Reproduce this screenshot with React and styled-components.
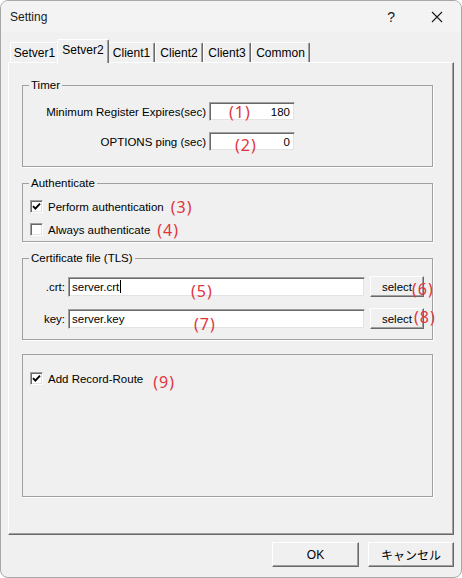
import styled, { createGlobalStyle } from 'styled-components';

const GlobalStyle = createGlobalStyle`
  html, body {
    margin: 0;
    padding: 0;
    background: #ffffff;
  }
  * {
    box-sizing: border-box;
  }
`;

const tabs = [
  { label: 'Setver1', width: 49 },
  { label: 'Setver2', width: 52, active: true },
  { label: 'Client1', width: 47 },
  { label: 'Client2', width: 48 },
  { label: 'Client3', width: 48 },
  { label: 'Common', width: 59 },
];

const CheckMark = () => (
  <svg width="9" height="9" viewBox="0 0 9 9">
    <path d="M1 4.2 L3.4 6.6 L8 1.6" fill="none" stroke="#000" strokeWidth="1.9" />
  </svg>
);

const Checkbox = ({ checked }) => (
  <Box>{checked && <CheckMark />}</Box>
);

const App = () => {
  return (
    <>
      <GlobalStyle />
      <Window>
        <TitleBar>
          <Title>Setting</Title>
          <TitleButtons>
            <Help>?</Help>
            <svg width="12" height="12" viewBox="0 0 12 12">
              <path d="M1 1 L11 11 M11 1 L1 11" stroke="#1a1a1a" strokeWidth="1.1" />
            </svg>
          </TitleButtons>
        </TitleBar>

        <Body>
          <TabStrip>
            {tabs.map((t) => (
              <Tab key={t.label} $active={t.active} $w={t.width}>{t.label}</Tab>
            ))}
          </TabStrip>

          <Panel>
            <Group $h={82}>
              <Legend>Timer</Legend>
              <FieldRow>
                <FieldLabel $w={183}>Minimum Register Expires(sec)</FieldLabel>
                <TextBox $w={86} $h={19} $right>180</TextBox>
              </FieldRow>
              <FieldRow $mt={11}>
                <FieldLabel $w={183}>OPTIONS ping (sec)</FieldLabel>
                <TextBox $w={86} $h={19} $right>0</TextBox>
              </FieldRow>
              <Note $x={206} $y={18}>(1)</Note>
              <Note $x={212} $y={51}>(2)</Note>
            </Group>

            <Group $h={59}>
              <Legend>Authenticate</Legend>
              <CheckRow>
                <Checkbox checked />
                <span>Perform authentication</span>
                <InlineNote>(3)</InlineNote>
              </CheckRow>
              <CheckRow $mt={10}>
                <Checkbox />
                <span>Always authenticate</span>
                <InlineNote>(4)</InlineNote>
              </CheckRow>
            </Group>

            <Group $h={82}>
              <Legend>Certificate file (TLS)</Legend>
              <FieldRow $top={17}>
                <FieldLabel $w={42}>.crt:</FieldLabel>
                <TextBox $w={297} $h={20}>server.crt<Caret /></TextBox>
                <SelectButton>select</SelectButton>
              </FieldRow>
              <FieldRow $mt={11}>
                <FieldLabel $w={42}>key:</FieldLabel>
                <TextBox $w={297} $h={20}>server.key</TextBox>
                <SelectButton>select</SelectButton>
              </FieldRow>
              <Note $x={168} $y={24}>(5)</Note>
              <Note $x={389} $y={22}>(6)</Note>
              <Note $x={171} $y={57}>(7)</Note>
              <Note $x={391} $y={50}>(8)</Note>
            </Group>

            <Group $h={143} $gap={14}>
              <CheckRow $top={17}>
                <Checkbox checked />
                <span>Add Record-Route</span>
                <InlineNote $gap={5} $drop={3}>(9)</InlineNote>
              </CheckRow>
            </Group>
          </Panel>

          <Footer>
            <DialogButton $w={87}>OK</DialogButton>
            <DialogButton $w={86}>キャンセル</DialogButton>
          </Footer>
        </Body>
      </Window>
    </>
  );
};

const Window = styled.div`
  width: 462px;
  height: 578px;
  border: 1px solid #a8a8a8;
  border-radius: 8px;
  background: #f0f0f0;
  display: flex;
  flex-direction: column;
  overflow: hidden;
  font-family: "Liberation Sans", Arial, sans-serif;
  color: #000;
`;

const TitleBar = styled.div`
  height: 31px;
  display: flex;
  align-items: center;
  justify-content: space-between;
  padding: 0 18px 0 9px;
  background: #f3f3f3;
`;

const Title = styled.div`
  font-size: 12px;
  color: #1a1a1a;
`;

const TitleButtons = styled.div`
  display: flex;
  align-items: center;
  gap: 36px;
`;

const Help = styled.span`
  font-size: 14px;
  color: #1a1a1a;
`;

const Body = styled.div`
  padding: 0 7px;
  display: flex;
  flex-direction: column;
`;

const TabStrip = styled.div`
  height: 30px;
  display: flex;
  align-items: flex-end;
  padding-left: 2px;
  position: relative;
  z-index: 1;
`;

const Tab = styled.div`
  width: ${(p) => p.$w}px;
  height: ${(p) => (p.$active ? 24 : 20)}px;
  margin: ${(p) => (p.$active ? '0 -1px -1px -2px' : '0')};
  padding-top: ${(p) => (p.$active ? 3 : 3)}px;
  text-align: center;
  font-size: 12px;
  background: #f0f0f0;
  border-top: 1px solid #ffffff;
  border-left: 1px solid #ffffff;
  border-right: 1px solid #696969;
  box-shadow: inset -1px 0 #a0a0a0;
  border-radius: 2px 2px 0 0;
  position: relative;
  z-index: ${(p) => (p.$active ? 2 : 1)};
`;

const Panel = styled.div`
  height: 473px;
  background: #f0f0f0;
  border-top: 1px solid #ffffff;
  border-left: 1px solid #ffffff;
  border-right: 1px solid #696969;
  border-bottom: 1px solid #696969;
  box-shadow: inset -1px -1px #a0a0a0;
  padding: 22px 20px 0 13px;
  display: flex;
  flex-direction: column;
  gap: 16px;
`;

const Group = styled.div`
  position: relative;
  height: ${(p) => p.$h}px;
  margin-top: ${(p) => (p.$gap ? p.$gap - 16 : 0)}px;
  border: 1px solid #a0a0a0;
  box-shadow: 1px 1px #ffffff;
  padding: 16px 0 0 7px;
  font-size: 11.5px;
`;

const Legend = styled.span`
  position: absolute;
  top: -8px;
  left: 6px;
  padding: 0 2px;
  background: #f0f0f0;
  line-height: 14px;
`;

const FieldRow = styled.div`
  display: flex;
  align-items: center;
  margin-top: ${(p) => p.$mt || 0}px;
  margin-left: -7px;
  padding-top: ${(p) => (p.$top ? p.$top - 16 : 0)}px;
`;

const FieldLabel = styled.span`
  width: ${(p) => p.$w}px;
  text-align: right;
  padding-right: 0;
  margin-right: 3px;
`;

const TextBox = styled.div`
  width: ${(p) => p.$w}px;
  height: ${(p) => p.$h}px;
  background: #ffffff;
  border: 1px solid;
  border-color: #a0a0a0 #f0f0f0 #f0f0f0 #a0a0a0;
  box-shadow: inset 1px 1px #696969, inset -1px -1px #e3e3e3;
  display: flex;
  align-items: center;
  justify-content: ${(p) => (p.$right ? 'flex-end' : 'flex-start')};
  padding: 0 4px 0 3px;
`;

const Caret = styled.span`
  display: inline-block;
  width: 1px;
  height: 13px;
  background: #000;
  margin-left: 1px;
`;

const SelectButton = styled.div`
  width: 54px;
  height: 21px;
  margin-left: 5px;
  display: flex;
  align-items: center;
  justify-content: center;
  background: #f0f0f0;
  border: 1px solid;
  border-color: #ffffff #696969 #696969 #ffffff;
  box-shadow: inset -1px -1px #a0a0a0;
`;

const CheckRow = styled.div`
  display: flex;
  align-items: center;
  height: 13px;
  margin-top: ${(p) => p.$mt || 0}px;
  padding-top: ${(p) => (p.$top ? p.$top - 16 : 0)}px;
  box-sizing: content-box;
  gap: 5px;
`;

const Box = styled.span`
  width: 13px;
  height: 13px;
  background: #ffffff;
  border: 1px solid;
  border-color: #a0a0a0 #ffffff #ffffff #a0a0a0;
  box-shadow: inset 1px 1px #696969, inset -1px -1px #e3e3e3;
  display: flex;
  align-items: center;
  justify-content: center;
  flex-shrink: 0;
`;

const Note = styled.span`
  position: absolute;
  left: ${(p) => p.$x}px;
  top: ${(p) => p.$y}px;
  font-family: "Noto Sans", sans-serif;
  font-size: 16px;
  line-height: 16px;
  letter-spacing: 1px;
  color: #e0353f;
`;

const InlineNote = styled.span`
  margin-left: ${(p) => p.$gap || 2}px;
  position: relative;
  top: ${(p) => p.$drop || 0}px;
  font-family: "Noto Sans", sans-serif;
  font-size: 16px;
  line-height: 16px;
  letter-spacing: 1px;
  color: #e0353f;
`;

const Footer = styled.div`
  display: flex;
  justify-content: flex-end;
  gap: 9px;
  padding-top: 7px;
`;

const DialogButton = styled.div`
  width: ${(p) => p.$w}px;
  height: 25px;
  display: flex;
  align-items: center;
  justify-content: center;
  font-size: 12px;
  font-family: "Liberation Sans", "Noto Sans CJK JP", sans-serif;
  background: #f0f0f0;
  border: 1px solid;
  border-color: #ffffff #696969 #696969 #ffffff;
  box-shadow: inset -1px -1px #a0a0a0;
`;

export default App;
